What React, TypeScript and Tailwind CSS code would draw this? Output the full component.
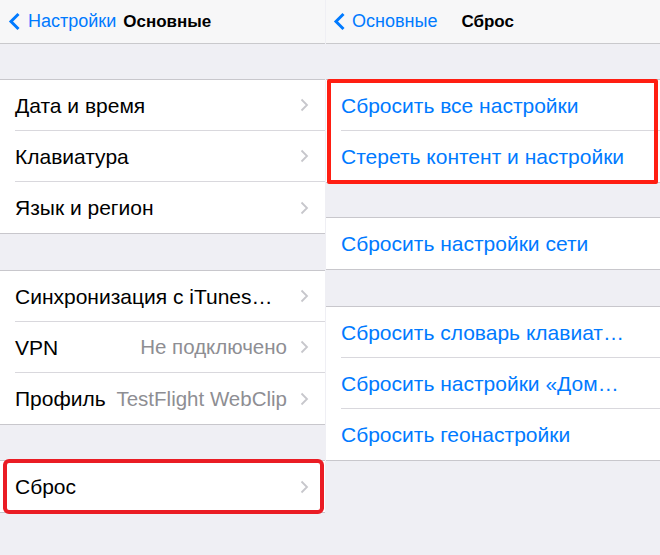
import React from "react";

const font = { fontFamily: '"Liberation Sans", Arial, sans-serif' };

function Chevron() {
  return (
    <svg width="9" height="14" viewBox="0 0 9 14" className="shrink-0">
      <polyline
        points="1.5,1.5 7,7 1.5,12.5"
        fill="none"
        stroke="#c7c7cc"
        strokeWidth="1.8"
      />
    </svg>
  );
}

function BackChevron() {
  return (
    <svg width="13" height="19" viewBox="0 0 13 19" className="shrink-0">
      <polyline
        points="10.5,2 3,9.5 10.5,17"
        fill="none"
        stroke="#007aff"
        strokeWidth="3"
      />
    </svg>
  );
}

type Row = { label: string; detail?: string; chevron?: boolean };

function Group({ rows, blue }: { rows: Row[]; blue?: boolean }) {
  return (
    <div className="bg-white border-t border-b border-[#c8c7cc]">
      {rows.map((row, i) => (
        <div key={row.label} className="pl-[15px]">
          <div
            className={`h-[51px] flex items-center pr-[16px] ${
              i < rows.length - 1 ? "border-b border-[#d9d8dd]" : ""
            }`}
          >
            <span
              className={`text-[21px] whitespace-nowrap pt-[1px] ${
                blue ? "text-[#007aff]" : "text-black"
              }`}
            >
              {row.label}
            </span>
            <div className="flex-1" />
            {row.detail && (
              <span className="text-[20.5px] text-[#8e8e93] whitespace-nowrap mr-[13px] pt-[1px]">
                {row.detail}
              </span>
            )}
            {row.chevron && <Chevron />}
          </div>
        </div>
      ))}
    </div>
  );
}

export default function App() {
  return (
    <div
      className="w-[660px] h-[555px] flex bg-[#efeff4] overflow-hidden"
      style={font}
    >
      {/* Left screen: Основные */}
      <div className="w-[325px] shrink-0 flex flex-col">
        <div className="h-[44px] bg-[#f7f7f8] border-b border-[#c9c9cc] flex items-center pl-[8px]">
          <BackChevron />
          <span className="ml-[7px] text-[18px] text-[#007aff]">Настройки</span>
          <span className="ml-[7px] text-[17px] font-bold text-black">
            Основные
          </span>
        </div>
        <div className="h-[35px]" />
        <Group
          rows={[
            { label: "Дата и время", chevron: true },
            { label: "Клавиатура", chevron: true },
            { label: "Язык и регион", chevron: true },
          ]}
        />
        <div className="h-[36px]" />
        <Group
          rows={[
            { label: "Синхронизация с iTunes…", chevron: true },
            { label: "VPN", detail: "Не подключено", chevron: true },
            { label: "Профиль", detail: "TestFlight WebClip", chevron: true },
          ]}
        />
        <div className="h-[35px]" />
        <div className="relative">
          <Group rows={[{ label: "Сброс", chevron: true }]} />
          <div className="absolute left-[3px] right-[1px] -top-[1px] -bottom-[1px] border-4 border-[#ea1c24] rounded-[6px]" />
        </div>
      </div>

      {/* Right screen: Сброс */}
      <div className="flex-1 flex flex-col ml-[1px]">
        <div className="h-[44px] bg-[#f7f7f8] border-b border-[#c9c9cc] flex items-center pl-[7px]">
          <BackChevron />
          <span className="ml-[6px] text-[18px] text-[#007aff]">Основные</span>
          <span className="ml-[24px] text-[17px] font-bold text-black">
            Сброс
          </span>
        </div>
        <div className="h-[35px]" />
        <div className="relative">
          <Group
            blue
            rows={[
              { label: "Сбросить все настройки" },
              { label: "Стереть контент и настройки" },
            ]}
          />
          <div className="absolute left-[1px] right-[2px] top-0 -bottom-[1px] border-4 border-[#ff1e12] rounded-[2px]" />
        </div>
        <div className="h-[34px]" />
        <Group blue rows={[{ label: "Сбросить настройки сети" }]} />
        <div className="h-[36px]" />
        <Group
          blue
          rows={[
            { label: "Сбросить словарь клавиат…" },
            { label: "Сбросить настройки «Дом…" },
            { label: "Сбросить геонастройки" },
          ]}
        />
      </div>
    </div>
  );
}
